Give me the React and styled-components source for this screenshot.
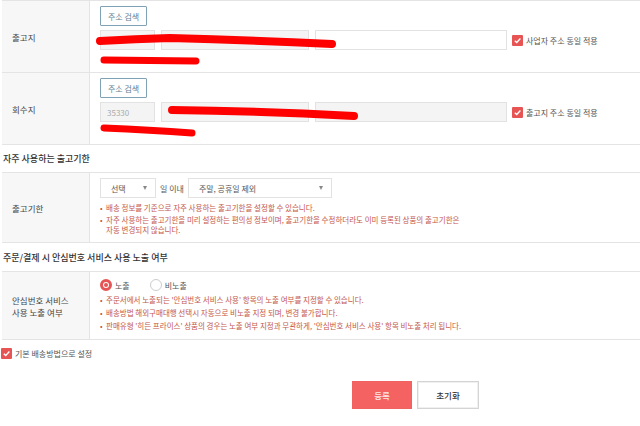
import styled, { createGlobalStyle } from "styled-components";

const GlobalStyle = createGlobalStyle`
  html, body {
    margin: 0;
    padding: 0;
    background: #fff;
    font-family: "Noto Sans CJK KR", "Noto Sans", sans-serif;
    color: #444;
  }
`;

const Page = styled.div`
  position: relative;
  width: 640px;
  height: 426px;
  overflow: hidden;
  padding-left: 2px;
  box-sizing: border-box;
`;

const Table = styled.div`
  border-top: 1px solid #e4e4e4;
  width: 660px;
`;

const Row = styled.div`
  display: flex;
  border-bottom: 1px solid #e4e4e4;
  min-height: ${(p) => p.$h}px;
  box-sizing: border-box;
`;

const Label = styled.div`
  width: 88px;
  box-sizing: border-box;
  flex-shrink: 0;
  background: #f7f7f7;
  border-right: 1px solid #e4e4e4;
  display: flex;
  align-items: center;
  padding-left: 10px;
  font-size: 8.5px;
  line-height: 12px;
  color: #444;
`;

const Content = styled.div`
  flex: 1;
  padding: ${(p) => p.$pad || "5px 10px"};
  display: flex;
  flex-direction: column;
  gap: ${(p) => p.$gap || 4}px;
`;

const Line = styled.div`
  display: flex;
  align-items: center;
  gap: ${(p) => p.$gap || 6}px;
  height: ${(p) => p.$h || 20}px;
`;

const SearchButton = styled.button`
  width: 47px;
  height: 20px;
  border: 1px solid #7fa3b5;
  background: #fff;
  color: #5f8193;
  font-family: inherit;
  font-size: 8px;
  padding: 0;
  border-radius: 1px;
`;

const Input = styled.div`
  width: ${(p) => p.$w}px;
  height: 20px;
  box-sizing: border-box;
  border: 1px solid #e2e2e2;
  background: ${(p) => (p.$grey ? "#f4f4f4" : "#fff")};
  color: #aaa;
  font-size: 8px;
  display: flex;
  align-items: center;
  padding-left: 6px;
`;

const Check = styled.span`
  width: 11px;
  height: 11px;
  background: #e65454;
  border-radius: 1px;
  display: inline-flex;
  align-items: center;
  justify-content: center;
  flex-shrink: 0;
`;

const CheckLabel = styled.label`
  display: flex;
  align-items: center;
  gap: 3px;
  font-size: 8px;
  color: #555;
  margin-left: -1px;
`;

const SectionTitle = styled.div`
  font-size: 9px;
  font-weight: 500;
  color: #333;
  height: ${(p) => p.$h}px;
  display: flex;
  align-items: center;
  padding-left: 1px;
`;

const Select = styled.div`
  width: ${(p) => p.$w}px;
  height: 20px;
  box-sizing: border-box;
  border: 1px solid #e2e2e2;
  background: #fff;
  display: flex;
  align-items: center;
  justify-content: space-between;
  padding: 0 8px 0 10px;
  font-size: 8px;
  color: #555;
`;

const Arrow = styled.span`
  width: 0;
  height: 0;
  border-left: 2.5px solid transparent;
  border-right: 2.5px solid transparent;
  border-top: 4px solid #888;
`;

const Small = styled.span`
  font-size: 8px;
  color: #555;
`;

const Notes = styled.ul`
  margin: 0;
  padding: 0;
  list-style: none;
  display: flex;
  flex-direction: column;
  gap: ${(p) => p.$gap || 1}px;
`;

const Note = styled.li`
  font-size: 7.5px;
  line-height: 10px;
  color: #c4574a;
  padding-left: 6px;
  position: relative;
  &::before {
    content: "•";
    position: absolute;
    left: 0;
  }
`;

const Radio = styled.span`
  width: 12px;
  height: 12px;
  border-radius: 50%;
  box-sizing: border-box;
  border: ${(p) => (p.$on ? "3px solid #e65454" : "1px solid #ccc")};
  background: #fff;
  display: inline-flex;
  align-items: center;
  justify-content: center;
  &::after {
    content: "";
    width: 4px;
    height: 4px;
    border-radius: 50%;
    background: ${(p) => (p.$on ? "#e65454" : "transparent")};
  }
`;

const RadioItem = styled.label`
  display: flex;
  align-items: center;
  gap: 3px;
  font-size: 8px;
  color: #555;
  margin-right: 14px;
`;

const Footer = styled.div`
  display: flex;
  justify-content: flex-start;
  gap: 5px;
  padding-left: 350px;
  margin-top: 15px;
`;

const ActionButton = styled.button`
  width: ${(p) => (p.$primary ? 60 : 62)}px;
  height: 28px;
  border: 1px solid ${(p) => (p.$primary ? "#f06262" : "#d4d4d4")};
  background: ${(p) => (p.$primary ? "#f56262" : "#fff")};
  color: ${(p) => (p.$primary ? "#fde8e8" : "#333")};
  font-family: inherit;
  font-size: 8.5px;
  font-weight: 500;
  padding: 0;
  box-shadow: ${(p) => (p.$primary ? "none" : "0 0 0 1px #f0f0f0 inset")};
`;

const Redaction = styled.svg`
  position: absolute;
  left: 0;
  top: 0;
  pointer-events: none;
`;

function Tick() {
  return (
    <svg width="9" height="9" viewBox="0 0 10 10">
      <path d="M2 5.2 L4.2 7.3 L8.2 2.8" fill="none" stroke="#fff" strokeWidth="1.5" />
    </svg>
  );
}

function AddressRow({ label, zip, detailGrey, checkText }) {
  return (
    <Row $h={72}>
      <Label>{label}</Label>
      <Content $pad="5px 10px 0 10px" $gap={4}>
        <Line>
          <SearchButton>주소 검색</SearchButton>
        </Line>
        <Line>
          <Input $w={55} $grey>{zip}</Input>
          <Input $w={148} $grey />
          <Input $w={192} $grey={detailGrey} />
          <CheckLabel>
            <Check>
              <Tick />
            </Check>
            {checkText}
          </CheckLabel>
        </Line>
      </Content>
    </Row>
  );
}

export default function App() {
  return (
    <Page>
      <GlobalStyle />
      <Table>
        <AddressRow label="출고지" zip="" checkText="사업자 주소 동일 적용" />
        <AddressRow label="회수지" zip="35330" detailGrey checkText="출고지 주소 동일 적용" />
      </Table>

      <SectionTitle $h={27}>자주 사용하는 출고기한</SectionTitle>
      <Table>
        <Row $h={70}>
          <Label>출고기한</Label>
          <Content $pad="5px 10px" $gap={5}>
            <Line $gap={4}>
              <Select $w={56}>
                선택 <Arrow />
              </Select>
              <Small>일 이내</Small>
              <Select $w={144}>
                주말, 공휴일 제외 <Arrow />
              </Select>
            </Line>
            <Notes $gap={2}>
              <Note>배송 정보를 기준으로 자주 사용하는 출고기한을 설정할 수 있습니다.</Note>
              <Note>
                자주 사용하는 출고기한을 미리 설정하는 편의성 정보이며, 출고기한을 수정하더라도 이미 등록된 상품의 출고기한은
                <br />
                자동 변경되지 않습니다.
              </Note>
            </Notes>
          </Content>
        </Row>
      </Table>

      <SectionTitle $h={28}>주문/결제 시 안심번호 서비스 사용 노출 여부</SectionTitle>
      <Table>
        <Row $h={68}>
          <Label>
            안심번호 서비스
            <br />
            사용 노출 여부
          </Label>
          <Content $pad="6px 10px" $gap={3}>
            <Line $h={14} $gap={0}>
              <RadioItem>
                <Radio $on />
                노출
              </RadioItem>
              <RadioItem>
                <Radio />
                비노출
              </RadioItem>
            </Line>
            <Notes $gap={3}>
              <Note>주문서에서 노출되는 '안심번호 서비스 사용' 항목의 노출 여부를 지정할 수 있습니다.</Note>
              <Note>배송방법 해외구매대행 선택시 자동으로 비노출 지정 되며, 변경 불가합니다.</Note>
              <Note>
                판매유형 '히든 프라이스' 상품의 경우는 노출 여부 지정과 무관하게, '안심번호 서비스 사용' 항목 비노출 처리 됩니다.
              </Note>
            </Notes>
          </Content>
        </Row>
      </Table>

      <Line $h={26} $gap={3}>
        <CheckLabel>
          <Check>
            <Tick />
          </Check>
          기본 배송방법으로 설정
        </CheckLabel>
      </Line>

      <Footer>
        <ActionButton $primary>등록</ActionButton>
        <ActionButton>초기화</ActionButton>
      </Footer>

      <Redaction width="640" height="426" viewBox="0 0 640 426">
        <g stroke="#f00" strokeLinecap="round" fill="none">
          <path d="M100 41 Q135 39 170 38 Q250 40 332 44" strokeWidth="8" />
          <path d="M104 60 L196 61" strokeWidth="7" />
          <path d="M172 110 Q260 111 354 116" strokeWidth="8" />
          <path d="M104 128 Q150 130 192 133" strokeWidth="7" />
        </g>
      </Redaction>
    </Page>
  );
}
